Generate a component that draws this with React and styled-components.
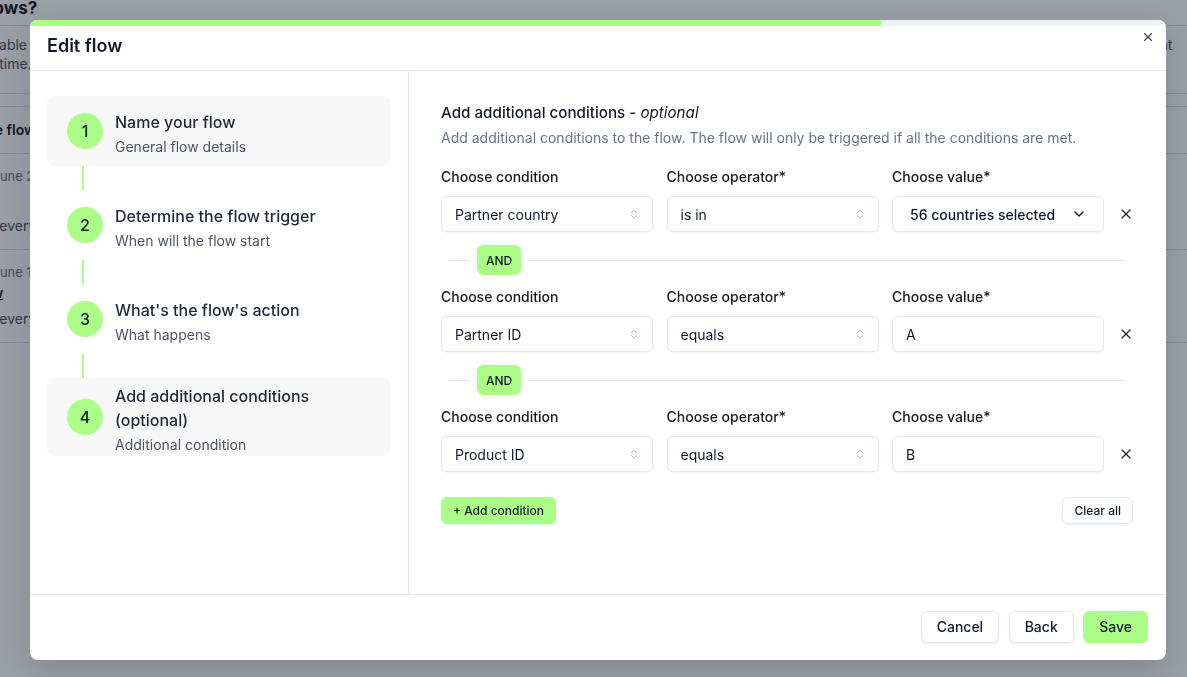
import React from "react";
import styled, { createGlobalStyle } from "styled-components";
import { ChevronsUpDown, ChevronDown, X } from "lucide-react";

const GREEN = "#aafd86";
const BORDER = "#e2e8f0";

const GlobalStyle = createGlobalStyle`
  * { box-sizing: border-box; }
  html, body { margin: 0; padding: 0; background: #fff; }
  body {
    font-family: Inter, "Noto Sans", "Liberation Sans", sans-serif;
    color: #111827;
    overflow: hidden;
  }
`;

// page that sits behind the dialog
const Page = styled.div`
  margin-left: -60px;
  width: calc(100% + 60px);
  height: 677px;
`;

const PageTitle = styled.h2`
  margin: -4px 0 0;
  font-size: 17px;
  font-weight: 700;
  line-height: 24px;
  padding-bottom: 5px;
  border-bottom: 1px solid #d6d9de;
`;

const PageText = styled.p`
  margin: 0;
  padding: 9px 0 20px;
  font-size: 14px;
  line-height: 19px;
  color: #4b5563;
  border-bottom: 1px solid #d6d9de;
`;

const PageRow = styled.div`
  padding: 12px 0 12px;
  border-bottom: 1px solid #d6d9de;
  border-top: ${(p) => (p.$first ? "1px solid #d6d9de" : "none")};
  margin-top: ${(p) => (p.$first ? "12px" : "0")};
`;

const RowTitle = styled.div`
  font-size: 14px;
  font-weight: 600;
  line-height: 22px;
  text-decoration: ${(p) => (p.$link ? "underline" : "none")};
`;

const RowMeta = styled.div`
  font-size: 13px;
  line-height: 20px;
  color: #6b7280;
`;

const RowText = styled.div`
  font-size: 14px;
  line-height: 22px;
  color: #4b5563;
  margin-top: ${(p) => p.$gap || 0}px;
`;

const Overlay = styled.div`
  position: fixed;
  inset: 0;
  background: rgba(15, 23, 42, 0.42);
`;

const Dialog = styled.div`
  position: fixed;
  left: 30px;
  top: 20px;
  width: 1136px;
  height: 640px;
  background: #fff;
  border-radius: 8px;
  box-shadow: 0 10px 30px rgba(0, 0, 0, 0.15);
  display: flex;
  flex-direction: column;
  overflow: hidden;
`;

const Progress = styled.div`
  position: absolute;
  left: 0;
  top: 0;
  right: 0;
  height: 6px;
  background: #eef1f5;
`;

const ProgressFill = styled.div`
  height: 100%;
  background: ${GREEN};
  border-radius: 0 4px 4px 0;
`;

const Header = styled.div`
  height: 51px;
  flex-shrink: 0;
  display: flex;
  align-items: center;
  padding: 0 17px;
  border-bottom: 1px solid ${BORDER};
`;

const Title = styled.h1`
  margin: 0;
  font-size: 18px;
  font-weight: 600;
  color: #111827;
`;

const CloseButton = styled.button`
  position: absolute;
  right: 10px;
  top: 9px;
  width: 16px;
  height: 16px;
  padding: 0;
  border: none;
  background: none;
  color: #374151;
  display: flex;
  align-items: center;
  justify-content: center;
`;

const Body = styled.div`
  flex: 1;
  display: flex;
  min-height: 0;
`;

const Sidebar = styled.div`
  width: 379px;
  flex-shrink: 0;
  border-right: 1px solid ${BORDER};
  padding: 25px 17px;
  display: flex;
  flex-direction: column;
`;

const Step = styled.div`
  display: flex;
  align-items: center;
  gap: 12px;
  min-height: 70px;
  padding: 1px 20px;
  border-radius: 8px;
  background: ${(p) => (p.$active ? "#f7f7f8" : "transparent")};
`;

const StepCircle = styled.div`
  width: 36px;
  height: 36px;
  border-radius: 50%;
  background: ${GREEN};
  flex-shrink: 0;
  display: flex;
  align-items: center;
  justify-content: center;
  font-size: 16px;
  font-weight: 500;
  color: #111827;
`;

const StepText = styled.div`
  padding-top: 5px;
`;

const StepTitle = styled.div`
  font-size: 16px;
  font-weight: 500;
  line-height: 24px;
  color: #1f2937;
`;

const StepSub = styled.div`
  margin-top: 3px;
  font-size: 14px;
  line-height: 20px;
  color: #4b5563;
`;

const Connector = styled.div`
  width: 2px;
  height: 24px;
  margin-left: 35px;
  background: ${GREEN};
`;

const Main = styled.div`
  flex: 1;
  padding: 30px 32px 29px;
  display: flex;
  flex-direction: column;
`;

const Heading = styled.h2`
  margin: 0;
  font-size: 15.2px;
  font-weight: 500;
  line-height: 24px;
  color: #111827;
  em { font-weight: 400; }
`;

const Description = styled.p`
  margin: 3px 0 19px;
  font-size: 14px;
  line-height: 20px;
  color: #64748b;
`;

const ConditionGrid = styled.div`
  display: grid;
  grid-template-columns: repeat(3, 212px) 16px;
  column-gap: 13.5px;
  row-gap: 9px;
  align-items: center;
`;

const Label = styled.div`
  font-size: 14px;
  font-weight: 500;
  line-height: 20px;
  color: #1a1a1a;
`;

const Field = styled.div`
  height: 36px;
  border: 1px solid ${BORDER};
  border-radius: 6px;
  background: #fff;
  display: flex;
  align-items: center;
  justify-content: space-between;
  padding: 0 ${(p) => (p.$strong ? 16 : 12)}px 0 ${(p) => (p.$strong ? 17 : 13)}px;
  font-size: 14px;
  font-weight: ${(p) => (p.$strong ? 500 : 400)};
  color: #111827;
  box-shadow: 0 1px 2px rgba(15, 23, 42, 0.04);
`;

const Remove = styled.button`
  border: none;
  background: none;
  padding: 0;
  color: #1f2937;
  display: flex;
  align-items: center;
  justify-content: center;
`;

const AndRow = styled.div`
  display: flex;
  align-items: center;
  gap: 7px;
  margin: 13px 8px 12px 8px;
`;

const Line = styled.div`
  height: 1px;
  background: ${BORDER};
  flex: ${(p) => (p.$short ? "0 0 21px" : "1")};
`;

const AndBadge = styled.div`
  width: 44px;
  height: 30px;
  border-radius: 6px;
  background: ${GREEN};
  display: flex;
  align-items: center;
  justify-content: center;
  font-size: 12px;
  font-weight: 500;
  color: #111827;
`;

const Actions = styled.div`
  display: flex;
  justify-content: space-between;
  align-items: center;
  margin-top: 25px;
  padding-right: 1px;
`;

const SmallButton = styled.button`
  height: 27px;
  padding: 0 11px;
  border-radius: 6px;
  font-family: inherit;
  font-size: 12px;
  font-weight: 500;
  color: #111827;
  border: 1px solid ${(p) => (p.$primary ? GREEN : BORDER)};
  background: ${(p) => (p.$primary ? GREEN : "#fff")};
  box-shadow: 0 1px 2px rgba(15, 23, 42, 0.08);
`;

const Footer = styled.div`
  height: 66px;
  flex-shrink: 0;
  border-top: 1px solid ${BORDER};
  display: flex;
  justify-content: flex-end;
  align-items: center;
  gap: 9.5px;
  padding: 0 18px 2px;
`;

const Button = styled.button`
  height: 32px;
  padding: 0 15px;
  border-radius: 6px;
  font-family: inherit;
  font-size: 14px;
  font-weight: 500;
  color: #111827;
  border: 1px solid ${(p) => (p.$primary ? GREEN : BORDER)};
  background: ${(p) => (p.$primary ? GREEN : "#fff")};
  box-shadow: 0 1px 2px rgba(15, 23, 42, 0.08);
`;

const steps = [
  { n: 1, title: "Name your flow", sub: "General flow details", active: true },
  { n: 2, title: "Determine the flow trigger", sub: "When will the flow start" },
  { n: 3, title: "What's the flow's action", sub: "What happens" },
  { n: 4, title: "Add additional conditions (optional)", sub: "Additional condition", active: true },
];

const conditions = [
  { condition: "Partner country", operator: "is in", value: "56 countries selected", multi: true },
  { condition: "Partner ID", operator: "equals", value: "A" },
  { condition: "Product ID", operator: "equals", value: "B" },
];

function SelectField({ children }) {
  return (
    <Field>
      <span>{children}</span>
      <ChevronsUpDown size={12} color="#9ca3af" strokeWidth={1.5} />
    </Field>
  );
}

function ConditionRow({ item }) {
  return (
    <ConditionGrid>
      <Label>Choose condition</Label>
      <Label>Choose operator*</Label>
      <Label>Choose value*</Label>
      <span />
      <SelectField>{item.condition}</SelectField>
      <SelectField>{item.operator}</SelectField>
      {item.multi ? (
        <Field $strong>
          <span>{item.value}</span>
          <ChevronDown size={16} color="#111827" strokeWidth={2} />
        </Field>
      ) : (
        <Field>{item.value}</Field>
      )}
      <Remove>
        <X size={16} strokeWidth={1.8} />
      </Remove>
    </ConditionGrid>
  );
}

export default function App() {
  return (
    <>
      <GlobalStyle />
      <Page>
        <PageTitle>Why flows?</PageTitle>
        <PageText>
          Flows enable people you work with to automate repetitive tasks and
          common actions. You can decide when a flow starts and what it does, and
          the partner will be given the right access at the right time.
        </PageText>
        <PageRow $first>
          <RowTitle>Welcome flow</RowTitle>
        </PageRow>
        <PageRow>
          <RowMeta>Created June 2, 2024</RowMeta>
          <RowText $gap={29}>Runs for every new partner</RowText>
        </PageRow>
        <PageRow>
          <RowMeta>Created June 10, 2024</RowMeta>
          <RowTitle $link>New flow</RowTitle>
          <RowText $gap={4}>Runs for every new product</RowText>
        </PageRow>
      </Page>

      <Overlay />
      <Dialog>
        <Progress>
          <ProgressFill style={{ width: `${0.75 * 100}%` }} />
        </Progress>
        <CloseButton>
          <X size={14} strokeWidth={2} />
        </CloseButton>
        <Header>
          <Title>Edit flow</Title>
        </Header>
        <Body>
          <Sidebar>
            {steps.map((s, i) => (
              <React.Fragment key={s.n}>
                {i > 0 && <Connector />}
                <Step $active={s.active}>
                  <StepCircle>{s.n}</StepCircle>
                  <StepText>
                    <StepTitle>{s.title}</StepTitle>
                    <StepSub>{s.sub}</StepSub>
                  </StepText>
                </Step>
              </React.Fragment>
            ))}
          </Sidebar>
          <Main>
            <Heading>
              Add additional conditions - <em>optional</em>
            </Heading>
            <Description>
              Add additional conditions to the flow. The flow will only be
              triggered if all the conditions are met.
            </Description>
            {conditions.map((c, i) => (
              <React.Fragment key={i}>
                {i > 0 && (
                  <AndRow>
                    <Line $short />
                    <AndBadge>AND</AndBadge>
                    <Line />
                  </AndRow>
                )}
                <ConditionRow item={c} />
              </React.Fragment>
            ))}
            <Actions>
              <SmallButton $primary>+ Add condition</SmallButton>
              <SmallButton>Clear all</SmallButton>
            </Actions>
          </Main>
        </Body>
        <Footer>
          <Button>Cancel</Button>
          <Button>Back</Button>
          <Button $primary>Save</Button>
        </Footer>
      </Dialog>
    </>
  );
}
